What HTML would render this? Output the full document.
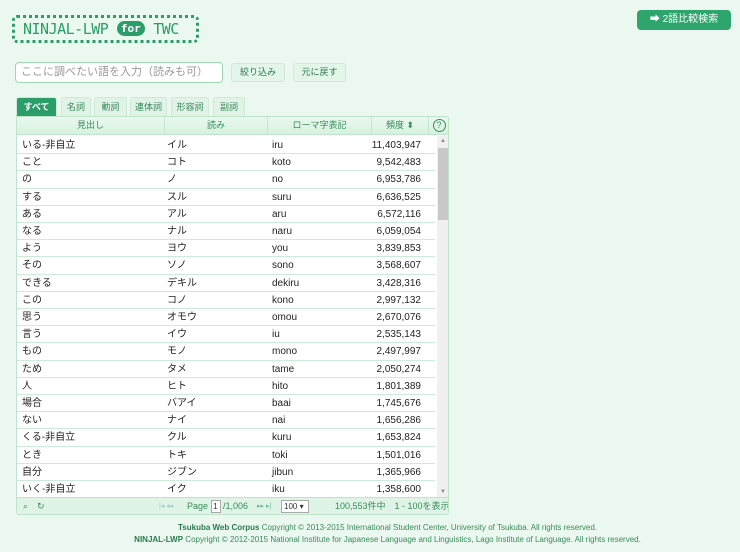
<!DOCTYPE html>
<html><head><meta charset="utf-8">
<style>
*{box-sizing:border-box;margin:0;padding:0}
body{width:740px;height:552px;background:#ebf8ef;font-family:"Liberation Sans","Noto Sans CJK JP",sans-serif;font-size:10px;color:#222;position:relative;overflow:hidden}
.logo{position:absolute;left:12px;top:15px;width:187px;height:28px;border:3px dotted #2a9d68;border-radius:5px;color:#2a9d68;font-family:"DejaVu Sans Mono","Liberation Mono",monospace;font-size:15px;line-height:22px;padding-left:8px;white-space:nowrap;letter-spacing:-0.5px}
.logo .for{display:inline-block;background:#2a9d68;color:#fff;border-radius:9px;font-size:11px;line-height:15px;padding:0 4px;vertical-align:2px;font-weight:bold;letter-spacing:0}
.cmp{position:absolute;left:637px;top:10px;width:94px;height:20px;background:#2ea56c;border-radius:4px;color:#fff;font-size:10px;line-height:20px;text-align:center}
.inp{position:absolute;left:15px;top:62px;width:208px;height:21px;border:1px solid #9fd5b3;border-radius:4px;background:#fff;color:#999;font-size:11px;line-height:19px;padding-left:5px}
.btn{position:absolute;top:63px;height:19px;border:1px solid #cfe9d8;border-radius:3px;background:#e4f5ea;color:#2a7a50;font-size:9px;line-height:17px;text-align:center}
.tabs{position:absolute;left:0;top:97px}
.tab{position:absolute;top:0;height:20px;background:#e1f3e7;border:1px solid #cfe9d8;border-bottom:none;border-radius:3px 3px 0 0;color:#3a8a5e;font-size:9px;line-height:19px;text-align:center}
.tab.on{background:#2a9d68;color:#fff;font-weight:bold;height:20px}
.tbl{position:absolute;left:16px;top:116px;width:433px;height:399px;border:1px solid #bfe3cb;background:#fff;border-radius:0 3px 3px 3px;overflow:hidden}
.hd{position:absolute;left:0;top:0;width:100%;height:18px;background:linear-gradient(#e9f8ee,#d7f1e0);border-bottom:1px solid #bfe3cb;color:#3a8a5e;font-size:9px;line-height:17px}
.hd div{position:absolute;top:0;text-align:center;border-right:1px solid #c6e6d0;height:17px}
.row{position:absolute;left:0;width:418px;height:17.2px;border-bottom:1px solid #cdebd6;font-size:10px;line-height:18px}
.row span{position:absolute;top:0}
.sb{position:absolute;left:420px;top:19px;width:12px;height:361px;background:#f0f0f0}
.ft{position:absolute;left:0;top:380px;width:100%;height:18px;background:#dff4e6;border-top:1px solid #bfe3cb;color:#3a8a5e;font-size:9px;line-height:17px;white-space:nowrap}
.ft span{position:absolute;top:0}
.cp{position:absolute;left:0;width:740px;font-size:8px;color:#3a8a5e;text-align:center;padding-left:35px}
.cp b{color:#2a7a50}
</style></head><body>
<div class="logo">NINJAL-LWP <span class="for">for</span> TWC</div>
<div class="cmp">➡ 2語比較検索</div>
<div class="inp">ここに調べたい語を入力（読みも可）</div>
<div class="btn" style="left:231px;width:54px">絞り込み</div>
<div class="btn" style="left:293px;width:53px">元に戻す</div>
<div class="tabs">
<div class="tab on" style="left:16px;width:41px">すべて</div>
<div class="tab" style="left:61px;width:30px">名詞</div>
<div class="tab" style="left:94px;width:33px">動詞</div>
<div class="tab" style="left:130px;width:37px">連体詞</div>
<div class="tab" style="left:171px;width:38px">形容詞</div>
<div class="tab" style="left:213px;width:32px">副詞</div>
</div>
<div class="tbl">
<div class="hd">
<div style="left:0;width:148px">見出し</div>
<div style="left:148px;width:103px">読み</div>
<div style="left:251px;width:104px">ローマ字表記</div>
<div style="left:355px;width:57px">頻度 ⬍</div>
<div style="left:412px;width:20px;border:none"><span style="display:inline-block;width:13px;height:13px;border:1px solid #3a8a5e;border-radius:50%;line-height:11px;margin-top:2px;font-size:9px">?</span></div>
</div>
<div id="rows"></div>
<div class="sb"><div style="position:absolute;left:1px;top:12px;width:10px;height:72px;background:#c8c8c8"></div><div style="position:absolute;left:3px;top:2px;font-size:6px;color:#888">▲</div><div style="position:absolute;left:3px;bottom:2px;font-size:6px;color:#888">▼</div></div>
<div class="ft">
<span style="left:6px">⌕</span><span style="left:20px">↻</span>
<span style="left:142px;color:#9cc;font-size:7px">|◂ ◂◂</span>
<span style="left:170px">Page <span style="position:static;display:inline-block;width:10px;height:13px;background:#fff;border:1px solid #aaa;line-height:11px;font-size:8px;color:#333;text-align:center;vertical-align:middle">1</span> /1,006</span>
<span style="left:240px;color:#6b9;font-size:7px">▸▸ ▸|</span>
<span style="left:264px;top:2px;width:28px;height:13px;background:#fff;border:1px solid #aaa;line-height:11px;font-size:8px;color:#333;padding-left:2px">100 ▾</span>
<span style="left:318px">100,553件中　1 - 100を表示</span>
</div>
</div>
<div class="cp" style="top:523px"><b>Tsukuba Web Corpus</b> Copyright © 2013-2015 International Student Center, University of Tsukuba. All rights reserved.</div>
<div class="cp" style="top:535px"><b>NINJAL-LWP</b> Copyright © 2012-2015 National Institute for Japanese Language and Linguistics, Lago Institute of Language. All rights reserved.</div>
<script>
var d=[["いる-非自立","イル","iru","11,403,947"],["こと","コト","koto","9,542,483"],["の","ノ","no","6,953,786"],["する","スル","suru","6,636,525"],["ある","アル","aru","6,572,116"],["なる","ナル","naru","6,059,054"],["よう","ヨウ","you","3,839,853"],["その","ソノ","sono","3,568,607"],["できる","デキル","dekiru","3,428,316"],["この","コノ","kono","2,997,132"],["思う","オモウ","omou","2,670,076"],["言う","イウ","iu","2,535,143"],["もの","モノ","mono","2,497,997"],["ため","タメ","tame","2,050,274"],["人","ヒト","hito","1,801,389"],["場合","バアイ","baai","1,745,676"],["ない","ナイ","nai","1,656,286"],["くる-非自立","クル","kuru","1,653,824"],["とき","トキ","toki","1,501,016"],["自分","ジブン","jibun","1,365,966"],["いく-非自立","イク","iku","1,358,600"]];
var h="";d.forEach(function(r,i){h+='<div class="row" style="top:'+(20+i*17.2)+'px"><span style="left:5px">'+r[0]+'</span><span style="left:150px">'+r[1]+'</span><span style="left:255px">'+r[2]+'</span><span style="right:14px">'+r[3]+'</span></div>'});
document.getElementById("rows").innerHTML=h;
</script>
</body></html>
